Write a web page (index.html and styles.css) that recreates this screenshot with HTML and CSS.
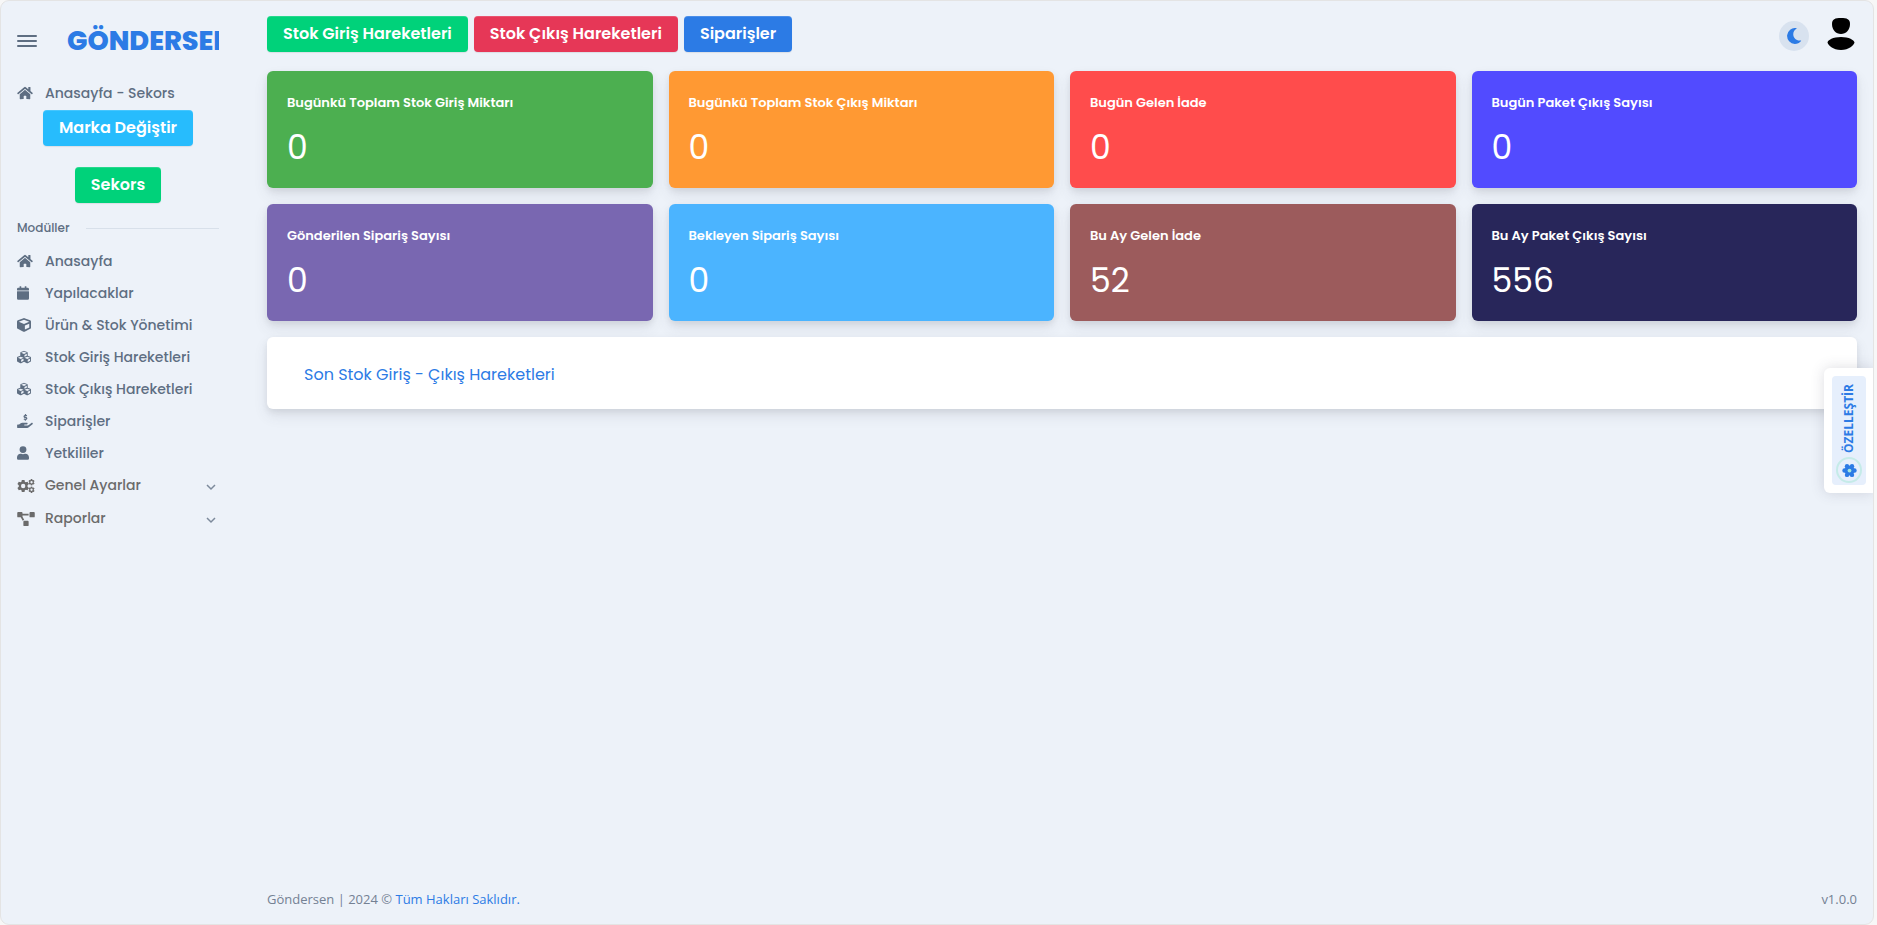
FILE: index.html
```html
<!DOCTYPE html>
<html lang="tr">
<head>
<meta charset="utf-8">
<title>Göndersen</title>
<meta name="viewport" content="width=device-width, initial-scale=1">
<link rel="stylesheet" href="styles.css">
</head>
<body>
<svg class="sprite" aria-hidden="true">
  <symbol id="home" viewBox="0 0 576 512"><path d="M280.4 148.3L96 300.1V464a16 16 0 0 0 16 16l112-.3a16 16 0 0 0 16-16V368a16 16 0 0 1 16-16h64a16 16 0 0 1 16 16v95.600a16 16 0 0 0 16 16.100L464 480a16 16 0 0 0 16-16V300L295.700 148.300a12.200 12.200 0 0 0-15.300 0zM571.600 251.500L488 182.600V44a12 12 0 0 0-12-12h-56a12 12 0 0 0-12 12v72.600L318.500 43a48 48 0 0 0-61 0L4.300 251.500a12 12 0 0 0-1.600 16.900l25.500 31a12 12 0 0 0 16.900 1.600L280.400 107.200a12.200 12.200 0 0 1 15.300 0L530.900 301a12 12 0 0 0 16.900-1.600l25.500-31a12 12 0 0 0-1.700-16.900z"/></symbol>
  <symbol id="calendar" viewBox="0 0 448 512"><path d="M12 192h424a12 12 0 0 1 12 12v260a48 48 0 0 1-48 48H48a48 48 0 0 1-48-48V204a12 12 0 0 1 12-12zm436-44v-36a48 48 0 0 0-48-48h-48V12a12 12 0 0 0-12-12h-40a12 12 0 0 0-12 12v52H160V12a12 12 0 0 0-12-12h-40a12 12 0 0 0-12 12v52H48a48 48 0 0 0-48 48v36a12 12 0 0 0 12 12h424a12 12 0 0 0 12-12z"/></symbol>
  <symbol id="cube" viewBox="0 0 512 512"><path d="M239.100 6.300l-208 78C12.400 91.300 0 109.200 0 129.200v225.100c0 18.200 10.300 34.800 26.500 42.900l208 104c13.500 6.800 29.400 6.800 42.900 0l208-104c16.300-8.100 26.500-24.800 26.500-42.900V129.200c0-20-12.400-37.900-31.100-44.900l-208-78c-10.800-4.100-22.800-4.100-33.700 0zM256 68.400l192 72v1.100l-192 78-192-78v-1.100l192-72zm32 356V275.500l160-65v133.900l-160 80z"/></symbol>
  <symbol id="cubes" viewBox="0 0 512 512"><path d="M488.600 250.200L392 214V105.500c0-15-9.300-28.400-23.400-33.700l-100-37.500a35.700 35.700 0 0 0-25.300 0l-100 37.500C129.300 77.100 120 90.500 120 105.500V214l-96.600 36.200C9.300 255.500 0 269 0 284v113.900c0 13.600 7.700 26.100 19.900 32.200l100 50a36 36 0 0 0 32.200 0l103.900-52 103.900 52a36 36 0 0 0 32.200 0l100-50c12.200-6.100 19.900-18.600 19.900-32.200V284c0-15-9.300-28.500-23.400-33.800zM358 214.800l-85 31.900v-68.200l85-37v73.300zM154 104.100l102-38.200 102 38.200v.6l-102 41.400-102-41.400v-.6zm84 291.100l-85 42.500v-79.100l85-38.800v75.400zm0-112l-102 41.400-102-41.400v-.6l102-38.200 102 38.200v.6zm240 112l-85 42.500v-79.100l85-38.800v75.400zm0-112l-102 41.400-102-41.400v-.6l102-38.200 102 38.200v.6z"/></symbol>
  <symbol id="hand" viewBox="0 0 576 512"><path d="M271 144l52 15c9 3 8 15-1 15h-33c-7 0-12-2-18-6-4-3-9-2-13 1l-17 17c-5 5-4 11 1 15 10 8 22 13 34 13v18c0 9 7 16 16 16h16c9 0 16-7 16-16v-18c31-4 53-28 50-58-2-22-18-40-39-46l-53-16c-8-3-7-14 2-14h33c7 0 12 2 18 6 4 3 9 2 13-1l17-17c5-5 4-11-1-15-10-8-22-13-34-13V16c0-9-7-16-16-16h-16c-9 0-16 7-16 16v18c-36 4-57 35-48 68 5 21 17 36 37 42zM565 328c-12-11-31-10-44 0L428 402c-11 9-25 14-40 14H272a16 16 0 0 1 0-32h78c16 0 31-11 33-27 4-20-12-37-31-37H192c-27 0-53 9-74 26l-46 38H16a16 16 0 0 0-16 16v96a16 16 0 0 0 16 16h357c14 0 28-5 40-14l151-121c15-12 16-35 1-49z"/></symbol>
  <symbol id="user" viewBox="0 0 448 512"><path d="M224 256a128 128 0 1 0 0-256 128 128 0 0 0 0 256zm90 32h-17a174 174 0 0 1-146 0h-17C60 288 0 348 0 422v42a48 48 0 0 0 48 48h352a48 48 0 0 0 48-48v-42c0-74-60-134-134-134z"/></symbol>
  <symbol id="gear" viewBox="0 0 24 24"><path fill-rule="evenodd" d="M9.500 1h5l.6 3.200 1.800 1 3.100-1.100 2.500 4.300-2.500 2.200v2.800l2.500 2.200-2.500 4.300-3.100-1.100-1.800 1-.6 3.200h-5l-.6-3.200-1.800-1L4 19.900l-2.500-4.300L4 13.400v-2.800L1.500 8.400 4 4.100l3.100 1.100 1.800-1zM12 8a4 4 0 1 0 0 8 4 4 0 0 0 0-8z"/></symbol>
  <symbol id="gears" viewBox="0 0 640 512"><use href="#gear" x="-24" y="16" width="480" height="480"/><use href="#gear" x="394" y="-10" width="256" height="256"/><use href="#gear" x="394" y="266" width="256" height="256"/></symbol>
  <symbol id="petals" viewBox="0 0 24 24"><g><circle cx="12" cy="12" r="8"/><circle cx="20" cy="12" r="3.500"/><circle cx="16" cy="19" r="3.500"/><circle cx="8" cy="19" r="3.500"/><circle cx="4" cy="12" r="3.500"/><circle cx="8" cy="5" r="3.500"/><circle cx="16" cy="5" r="3.500"/></g><circle cx="12" cy="12" r="3" fill="#a5e6dc"/></symbol>
  <symbol id="diagram" viewBox="0 0 640 512"><path d="M384 320H256a32 32 0 0 0-32 32v128a32 32 0 0 0 32 32h128a32 32 0 0 0 32-32V352a32 32 0 0 0-32-32zM192 32a32 32 0 0 0-32-32H32A32 32 0 0 0 0 32v128a32 32 0 0 0 32 32h95l73 128c11-19 32-32 56-32h.300L192 175.500V128h224V64H192V32zM608 0H480a32 32 0 0 0-32 32v128a32 32 0 0 0 32 32h128a32 32 0 0 0 32-32V32a32 32 0 0 0-32-32z"/></symbol>
  <symbol id="moon" viewBox="0 0 512 512"><path d="M283 512c79 0 151-36 199-95 7-9-1-22-12-20-124 24-238-71-238-197 0-72 39-139 101-174 10-6 8-21-4-23A256 256 0 1 0 283 512z"/></symbol>
  <symbol id="chevron" viewBox="0 0 10 10"><path d="M1 3l4 4 4-4" fill="none" stroke="currentColor" stroke-width="1.500"/></symbol>
</svg>
<div class="app">
  <aside class="sidebar">
    <div class="brand-row">
      <button class="burger" type="button" aria-label="Menü"><span></span><span></span><span></span></button>
      <a class="brand" href="#">GÖNDERSEN</a>
    </div>
    <nav class="nav">
      <a class="link" href="#"><svg class="ico w16"><use href="#home"/></svg>Anasayfa - Sekors</a>
      <div class="brand-actions">
        <button class="btn info" type="button">Marka Değiştir</button>
        <button class="btn success" type="button">Sekors</button>
      </div>
      <div class="section">Modüller</div>
      <a class="link" href="#"><svg class="ico w16"><use href="#home"/></svg>Anasayfa</a>
      <a class="link" href="#"><svg class="ico w12"><use href="#calendar"/></svg>Yapılacaklar</a>
      <a class="link" href="#"><svg class="ico w14"><use href="#cube"/></svg>Ürün &amp; Stok Yönetimi</a>
      <a class="link" href="#"><svg class="ico w14"><use href="#cubes"/></svg>Stok Giriş Hareketleri</a>
      <a class="link" href="#"><svg class="ico w14"><use href="#cubes"/></svg>Stok Çıkış Hareketleri</a>
      <a class="link" href="#"><svg class="ico w16"><use href="#hand"/></svg>Siparişler</a>
      <a class="link" href="#"><svg class="ico w12"><use href="#user"/></svg>Yetkililer</a>
      <a class="link group" href="#"><svg class="ico w18"><use href="#gears"/></svg>Genel Ayarlar<svg class="chev"><use href="#chevron"/></svg></a>
      <a class="link group" href="#"><svg class="ico w18"><use href="#diagram"/></svg>Raporlar<svg class="chev"><use href="#chevron"/></svg></a>
    </nav>
  </aside>
  <main class="content">
    <header class="topbar">
      <button class="btn success" type="button">Stok Giriş Hareketleri</button>
      <button class="btn danger" type="button">Stok Çıkış Hareketleri</button>
      <button class="btn primary" type="button">Siparişler</button>
      <div class="tools">
        <button class="theme" type="button" aria-label="Tema"><svg><use href="#moon"/></svg></button>
        <button class="avatar" type="button" aria-label="Profil"><svg viewBox="0 0 28 34"><path d="M14 1c6 0 9 1 9 6 0 6-4 10-9 10S5 13 5 7c0-5 3-6 9-6zM14 20c8 0 13 3 13.500 5.500C27 28 22 33 14 33S1 28 .5 25.500C1 23 6 20 14 20z"/></svg></button>
      </div>
    </header>
    <section class="cards">
      <article class="card green"><h2>Bugünkü Toplam Stok Giriş Miktarı</h2><p>0</p></article>
      <article class="card orange"><h2>Bugünkü Toplam Stok Çıkış Miktarı</h2><p>0</p></article>
      <article class="card red"><h2>Bugün Gelen İade</h2><p>0</p></article>
      <article class="card indigo"><h2>Bugün Paket Çıkış Sayısı</h2><p>0</p></article>
      <article class="card purple"><h2>Gönderilen Sipariş Sayısı</h2><p>0</p></article>
      <article class="card sky"><h2>Bekleyen Sipariş Sayısı</h2><p>0</p></article>
      <article class="card brown"><h2>Bu Ay Gelen İade</h2><p>52</p></article>
      <article class="card navy"><h2>Bu Ay Paket Çıkış Sayısı</h2><p>556</p></article>
    </section>
    <section class="panel"><a href="#">Son Stok Giriş - Çıkış Hareketleri</a></section>
    <footer class="footer"><span>Göndersen | 2024 © <a href="#">Tüm Hakları Saklıdır.</a></span><span>v1.0.0</span></footer>
  </main>
  <button class="customize" type="button"><span class="customize-in"><span class="customize-text">ÖZELLEŞTİR</span><span class="ring"><svg><use href="#petals"/></svg></span></span></button>
</div>
</body>
</html>
```
FILE: styles.css
```css
* { box-sizing: border-box; }
body { margin: 0; background: #f7f7f7; font-family: Poppins, Inter, sans-serif; color: #5e6e82; }
a { color: inherit; text-decoration: none; }
button { font: inherit; cursor: pointer; border: 0; padding: 0; background: none; }
svg { fill: currentColor; display: block; }
.sprite { position: absolute; width: 0; height: 0; }
.app { position: relative; display: flex; min-height: 100vh; margin-right: 3px; border: 1px solid #e4e4e4; border-radius: 9px; background: #edf2f9; overflow: hidden; }

.sidebar { flex: none; width: 218px; padding-left: 16px; }
.brand-row { display: flex; align-items: center; gap: 30px; height: 76px; padding-top: 3px; }
.burger { flex: none; display: flex; flex-direction: column; gap: 3px; width: 20px; }
.burger span { height: 2px; background: #5e6e82; border-radius: 1px; }
.brand { flex: 1; overflow: hidden; white-space: nowrap; font-weight: 800; font-size: 27px; line-height: 40px; color: #2c7be5; }
.link { display: flex; align-items: center; height: 32px; font-size: 14px; font-weight: 500; white-space: nowrap; }
.ico { flex: none; height: 14px; }
.w12 { width: 12px; margin-right: 16px; }
.w14 { width: 14px; margin-right: 14px; }
.w16 { width: 16px; margin-right: 12px; }
.w18 { width: 18px; margin-right: 10px; }
.group { height: 33px; color: #6b6b6b; }
.chev { width: 10px; height: 10px; margin: 2px 3px 0 auto; color: #7d8a9c; }
.brand-actions { display: flex; flex-direction: column; align-items: center; gap: 21px; padding-top: 1px; }
.section { display: flex; align-items: center; gap: 16px; height: 34px; margin-top: 8px; font-size: 12px; font-weight: 500; }
.section::after { content: ""; flex: 1; height: 1px; background: #d8e0ea; }
.btn { height: 36px; padding: 0 16px; border-radius: 4px; color: #fff; font-size: 16px; font-weight: 600; line-height: 36px; white-space: nowrap; box-shadow: inset 0 1px 0 rgba(255,255,255,.15), 0 1px 1px rgba(0,0,0,.08); }
.info { background: #27bcfd; }
.success { background: #00d27a; }
.danger { background: #e63757; }
.primary { background: #2c7be5; }

.content { flex: 1; min-width: 0; display: flex; flex-direction: column; padding: 0 16px 0 48px; }
.topbar { display: flex; align-items: center; gap: 6px; height: 70px; padding-bottom: 4px; }
.tools { display: flex; align-items: center; gap: 18px; margin-left: auto; }
.theme { display: grid; place-items: center; width: 30px; height: 30px; margin-top: 4px; border-radius: 50%; background: #d8e2ef; color: #2c7be5; }
.theme svg { width: 16px; height: 16px; }
.avatar { color: #000; padding-right: 2px; }
.avatar svg { width: 28px; height: 34px; }
.cards { display: grid; grid-template-columns: repeat(4, minmax(0, 1fr)); gap: 16px; }
.card { min-height: 117px; padding: 20px; border-radius: 6px; color: #fff; box-shadow: 0 7px 14px rgba(65,69,88,.1), 0 3px 6px rgba(0,0,0,.07); }
.card h2 { margin: 0 0 13px; font-size: 13px; font-weight: 600; line-height: 24px; white-space: nowrap; }
.card p { margin: 0; font-size: 33px; font-weight: 400; line-height: 40px; }
.green { background: #4caf50; }
.orange { background: #ff9933; }
.red { background: #ff4c4c; }
.indigo { background: #524bff; }
.purple { background: #7967b1; }
.sky { background: #4bb4ff; }
.brown { background: #9c5b5c; }
.navy { background: #28265a; }
.panel { margin-top: 16px; padding: 26px 37px 22px; border-radius: 6px; background: #fff; color: #2c7be5; font-size: 16px; line-height: 24px; box-shadow: 0 7px 14px rgba(65,69,88,.1), 0 3px 6px rgba(0,0,0,.07); }
.footer { display: flex; justify-content: space-between; margin-top: auto; padding-bottom: 15px; font-family: "Open Sans", "Noto Sans", sans-serif; font-size: 13px; line-height: 20px; color: #748194; }
.footer a { color: #2c7be5; }

.customize { position: absolute; right: 0; top: 367px; padding: 8px 7px 8px 8px; background: #fff; border-radius: 6px 0 0 6px; box-shadow: 0 0 14px rgba(65,69,88,.18); }
.customize-in { display: flex; flex-direction: column; align-items: center; justify-content: space-between; gap: 4px; width: 34px; height: 109px; padding: 8px 0 2px; border-radius: 4px; background: #e6effc; color: #2c7be5; }
.customize-text { writing-mode: vertical-rl; transform: rotate(180deg); font-family: "Open Sans", sans-serif; font-size: 12px; font-weight: 700; line-height: 16px; }
.ring { display: grid; place-items: center; width: 26px; height: 26px; border: 2px solid #c5ebe8; border-radius: 50%; }
.ring svg { width: 15px; height: 15px; }
```
